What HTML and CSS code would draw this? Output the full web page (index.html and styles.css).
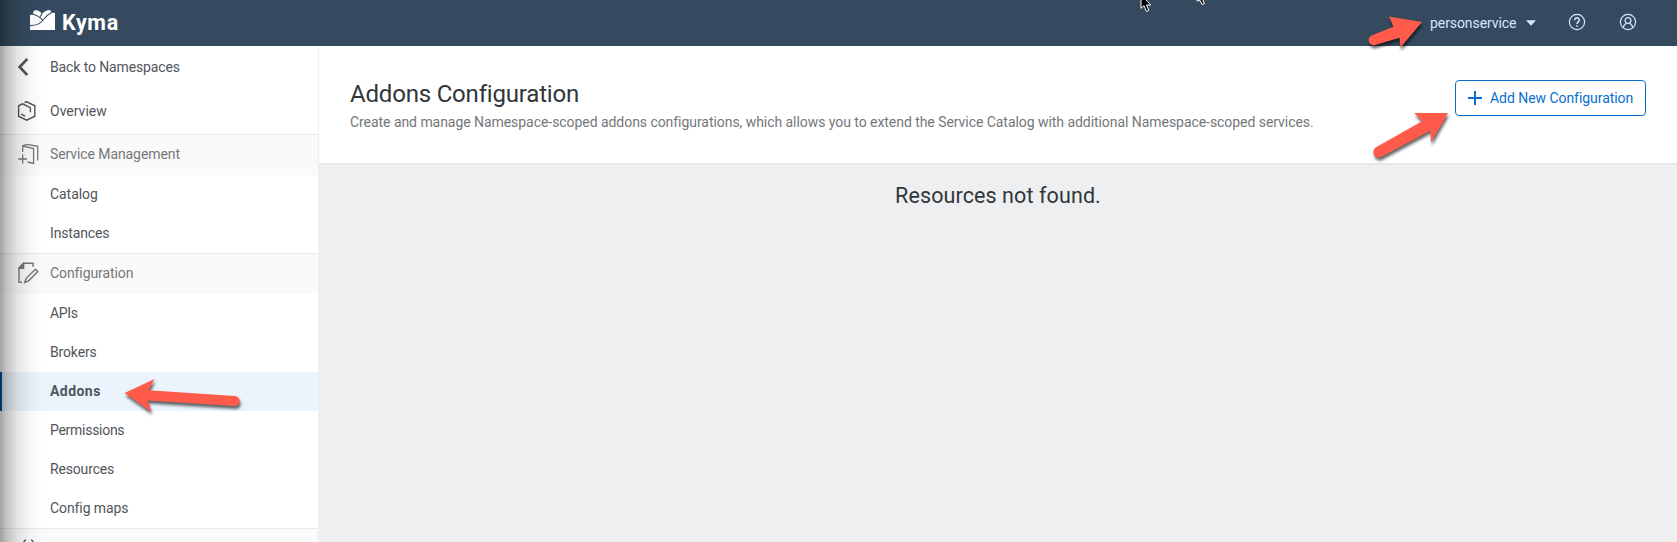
FILE: index.html
```html
<!DOCTYPE html>
<html lang="en">
<head>
<meta charset="utf-8">
<title>Kyma</title>
<link rel="stylesheet" href="styles.css">
</head>
<body>
<header class="topbar">
  <div class="brand">
    <svg class="brand-mark" width="26" height="22" viewBox="0 0 26 22"><path d="M0 6 3 5.600 3.300 2.500 5.500.9C8.500 1.500 10.500 2.500 12 4.700 14 2.500 17 1 20.500 1L21 3.500 25 4V21H0Z" fill="#fff"/><path d="M0 16.600C8 16.600 10.500 14 13.500 10.500S18 5.500 21.500 3.600" fill="none" stroke="#354a5f" stroke-width="1.100"/><path d="M2.500 5.200C7 6 10 8 13 11.500M12 4.200C11.500 5.800 10.800 6.800 10 7.800" fill="none" stroke="#354a5f" stroke-width="1.100"/></svg>
    <span class="brand-name">Kyma</span>
  </div>
  <div class="tools">
    <span class="namespace">personservice</span>
    <svg class="caret" width="10" height="6" viewBox="0 0 10 6"><path d="M0 .3H10L5 5.800Z" fill="#d1e8ff"/></svg>
    <svg class="help" width="18" height="18" viewBox="0 0 18 18" fill="none" stroke="#d1e8ff" stroke-width="1.200"><circle cx="9" cy="9" r="7.600"/><path d="M6.700 7.200C6.700 4 11.400 4.200 11.300 7.100 11.200 8.900 9 8.900 9 11" stroke-width="1.500"/><path d="M9 12.200V13.800" stroke-width="1.600"/></svg>
    <svg class="user" width="18" height="18" viewBox="0 0 18 18" fill="none" stroke="#d1e8ff" stroke-width="1.200"><circle cx="9" cy="9" r="7.600"/><circle cx="9" cy="7.500" r="2.900"/><path d="M4.300 14.500C4.700 11.900 6.200 11.300 7.400 10.300M13.700 14.500C13.300 11.900 11.800 11.300 10.600 10.300"/></svg>
  </div>
</header>
<div class="layout">
  <nav class="sidebar">
    <a class="item item-back"><svg width="20" height="20" viewBox="0 0 20 20" fill="none" stroke="#51555a" stroke-width="2.600"><path d="M10.300 1.800 2.600 10 10.300 18.200"/></svg><span class="l-back">Back to Namespaces</span></a>
    <a class="item item-overview"><svg width="20" height="20" viewBox="0 0 20 20" fill="none" stroke="#51555a" stroke-width="1.400"><path d="M7.500 1.500 9.700.8 17.800 4.800V15.200L9.700 19.200 1.600 15.200V4.800L5.500 2.900 13.400 6.600V11.200M4.200 13.200 8 15.200"/></svg><span class="l-overview">Overview</span></a>
    <div class="group"><svg width="22" height="22" viewBox="0 0 22 22" fill="none" stroke="#74777a" stroke-width="1.300"><path d="M4.700 9V3L15.600 5.600V20.500L9.600 19M5 2.700 9 1.300 19.700 3.400V17.500M4.700 11.500V20.500M.3 16H9"/></svg><span class="l-service">Service Management</span></div>
    <a class="item"><span class="l-catalog">Catalog</span></a>
    <a class="item"><span class="l-instances">Instances</span></a>
    <div class="group"><svg width="22" height="22" viewBox="0 0 22 22" fill="none" stroke="#74777a" stroke-width="1.400"><path d="M4 20.300H1V6L5.600 1.300H15V5M6.700 20.500 8.200 16.300 17.500 7.200 19.800 9.500 10.600 18.800Z"/><path d="M1 6.400V6L5.600 1.300V6.400Z" fill="#74777a"/></svg><span class="l-config">Configuration</span></div>
    <a class="item"><span class="l-apis">APIs</span></a>
    <a class="item"><span class="l-brokers">Brokers</span></a>
    <a class="item selected"><span class="l-addons">Addons</span></a>
    <a class="item"><span class="l-permissions">Permissions</span></a>
    <a class="item"><span class="l-resources">Resources</span></a>
    <a class="item"><span class="l-maps">Config maps</span></a>
    <div class="group"><svg width="22" height="22" viewBox="0 0 22 22" fill="none" stroke="#51555a" stroke-width="1.400"><path d="M8 3C4.500 3.300 6.500 8 3.500 11M13 3C16.500 3.300 14.500 8 17.500 11"/></svg></div>
  </nav>
  <main class="content">
    <section class="page-head">
      <div>
        <h1 class="title">Addons Configuration</h1>
        <p class="description">Create and manage Namespace-scoped addons configurations, which allows you to extend the Service Catalog with additional Namespace-scoped services.</p>
      </div>
      <button class="add"><svg width="14" height="14" viewBox="0 0 14 14" stroke="#0a6ed1" stroke-width="2"><path d="M7 0V14M0 7H14"/></svg><span class="l-add">Add New Configuration</span></button>
    </section>
    <p class="empty"><span>Resources not found.</span></p>
  </main>
</div>
<div class="edge-shadow"></div>
<svg class="annotations" width="1677" height="542" viewBox="0 0 1677 542">
  <g class="arrows" fill="#ff5a4a">
    <path d="M1422 22 1400.500 47.500 1399.500 37.800 1376 44.800A5 5 0 0 1 1371.500 35.500L1393.500 26.800 1389 16.500Z"/>
    <path d="M1448 113 1431 142.500 1430.500 130.500 1381.500 156.800A5.200 5.200 0 0 1 1376 147.300L1422.500 121 1414 113Z"/>
    <path d="M124.500 393 154.500 379 148.500 390.200 235 396A5 5 0 0 1 234.500 406L147.500 400.500 151.500 412Z"/>
  </g>
  <path d="M1141-5V8.300L1144 5.700 1146.500 11.500 1148.800 10.400 1146.500 5H1150.800Z" fill="#000" stroke="#fff"/>
  <path d="M1197-9V1L1200 .5 1202 4.500 1204.500 3.500 1202.500-1Z" fill="#222" stroke="#fff"/>
</svg>
</body>
</html>
```
FILE: styles.css
```css
* { box-sizing: border-box; }
body { margin: 0; height: 542px; overflow: hidden; display: flex; flex-direction: column; font: 14px/20px Roboto, "Liberation Sans", sans-serif; color: #51555a; }
.topbar { height: 46px; flex: none; background: #354a5f; display: flex; justify-content: space-between; }
.brand { display: flex; padding: 9px 0 0 30px; gap: 6px; }
.brand-name { color: #fff; font-weight: 700; font-size: 21.500px; line-height: 27px; letter-spacing: .65px; }
.tools { display: flex; align-items: center; padding-right: 40px; color: #d1e8ff; }
.namespace { width: 96px; margin-top: -1px; white-space: nowrap; letter-spacing: -.08px; }
.help { margin: -3px 33px 0 32px; }
.user { margin-top: -2px; }
.layout { flex: 1; min-height: 0; display: flex; }
.sidebar { width: 318px; flex: none; background: #fff; }
.item { height: 39px; display: flex; align-items: center; padding: 0 0 2px 50px; white-space: nowrap; }
.item-back, .item-overview { padding-left: 17px; gap: 13px; }
.item-back { height: 43px; }
.item-overview { height: 45px; }
.group { height: 41px; border-top: 1px solid #e8e8e8; background: #fafafa; display: flex; align-items: center; gap: 10px; padding: 0 0 2px 18px; color: #74777a; white-space: nowrap; }
.selected { background: #ebf4fd; border-left: 2px solid #0854a0; padding-left: 48px; font-weight: 700; }
.l-back { letter-spacing: -.12px; }
.l-service, .l-config, .l-maps { letter-spacing: -.09px; }
.l-catalog { letter-spacing: -.06px; }
.l-instances, .l-brokers, .l-resources { letter-spacing: -.16px; }
.l-apis { letter-spacing: -.3px; }
.l-addons { letter-spacing: .45px; }
.l-permissions { letter-spacing: -.28px; }
.l-add { letter-spacing: -.05px; }
.content { flex: 1; background: #edeff0; border-left: 1px solid #eeeeee; }
.page-head { height: 119px; background: #fff; border-bottom: 2px solid #e6e7e8; display: flex; justify-content: space-between; padding: 32px 31px 0 31px; }
.title { margin: 0; font-size: 24px; line-height: 32px; font-weight: 400; letter-spacing: -.19px; color: #32363a; }
.description { margin: 2px 0 0; line-height: 20px; letter-spacing: -.052px; color: #74777a; white-space: nowrap; }
.add { width: 191px; height: 36px; margin-top: 2px; padding: 0 0 0 12px; border: 1px solid #0a6ed1; border-radius: 4px; background: #fff; color: #0a6ed1; font: inherit; display: flex; align-items: center; gap: 8px; white-space: nowrap; }
.empty { margin: 16px 0 0; text-align: center; font-size: 21.500px; line-height: 30px; letter-spacing: .1px; color: #32363a; }
.edge-shadow { position: absolute; left: 0; top: 0; width: 44px; height: 542px; background: linear-gradient(90deg, rgba(0,0,0,.36), rgba(0,0,0,.24) 14%, rgba(0,0,0,.1) 40%, rgba(0,0,0,.03) 70%, transparent); }
.annotations { position: absolute; left: 0; top: 0; }
.arrows { filter: drop-shadow(1px 3px 1.500px rgba(0,0,0,.6)); }
```
